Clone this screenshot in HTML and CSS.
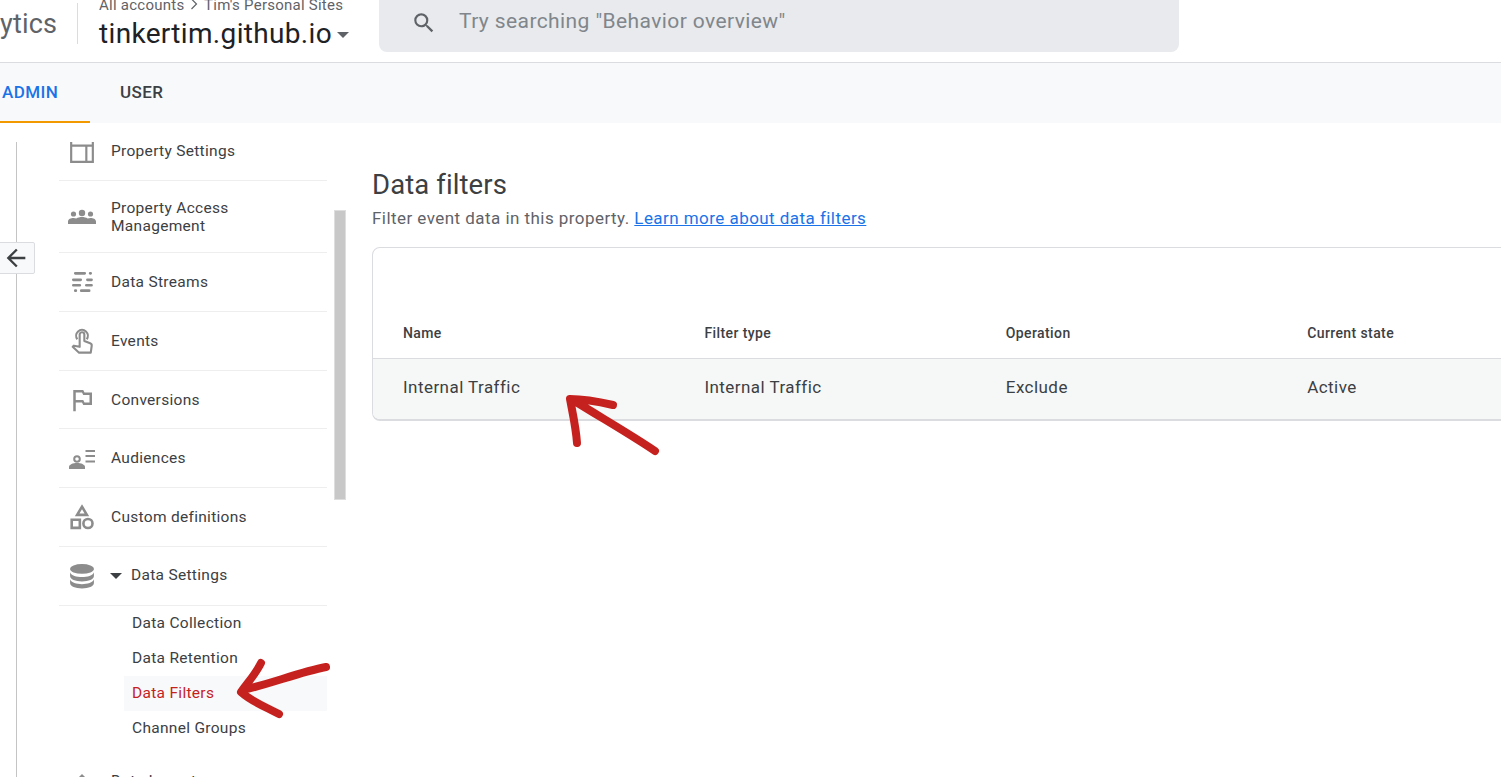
FILE: index.html
```html
<!DOCTYPE html>
<html lang="en">
<head>
    <meta charset="UTF-8">
    <meta name="viewport" content="width=device-width, initial-scale=1.0">
    <title>Data filters</title>
    <link rel="stylesheet" href="styles.css">
</head>
<body>
    <header class="topbar">
        <div class="product">ytics</div>
        <div class="account">
            <div class="crumbs">All accounts
                <svg class="crumb-sep" viewBox="0 0 8 12"><path d="M1.5 1l5 5-5 5"/></svg>
                Tim's Personal Sites</div>
            <div class="site">tinkertim.github.io<span class="caret site-caret"></span></div>
        </div>
        <div class="search">
            <svg class="search-icon" viewBox="0 0 24 24"><path d="M15.5 14h-.79l-.28-.27A6.47 6.47 0 0 0 16 9.5 6.5 6.5 0 1 0 9.5 16c1.61 0 3.09-.59 4.23-1.57l.27.28v.79l5 4.99L20.49 19l-4.99-5zm-6 0C7.01 14 5 11.99 5 9.5S7.01 5 9.5 5 14 7.01 14 9.5 11.99 14 9.5 14z"/></svg>
            <span class="search-text">Try searching "Behavior overview"</span>
        </div>
    </header>

    <nav class="tabs">
        <div class="tab active">ADMIN</div>
        <div class="tab">USER</div>
    </nav>

    <div class="content">
        <aside class="sidebar">
            <ul class="menu">
                <li class="menu-item first">
                    <svg class="icon" viewBox="0 0 24 24"><path class="line" d="M2 2h20v20H2zM2 7h20M16 7v15"/></svg>
                    Property Settings
                </li>
                <li class="menu-item tall">
                    <svg class="icon wide" viewBox="0 0 28 24"><circle cx="14" cy="8" r="3.2"/><circle cx="5.5" cy="9" r="2.6"/><circle cx="22.5" cy="9" r="2.6"/><path d="M0 19v-2.5C0 14 3 13 5.5 13c1 0 2 .2 2.8.5C9.800 12.500 12 12 14 12s4.200.5 5.700 1.500c.8-.3 1.800-.5 2.800-.5 2.500 0 5.500 1 5.500 3.500V19z"/></svg>
                    <span class="tall-label">Property Access<br>Management</span>
                </li>
                <li class="menu-item">
                    <svg class="icon" viewBox="0 0 24 24"><path class="line thick" d="M5.800 4h8.700M19.500 4h.5M4 10h6.800M17 10h3.800M4 15h6M16 15h4.800M5.800 20h.5M11.300 20h7.300"/></svg>
                    Data Streams
                </li>
                <li class="menu-item">
                    <svg class="icon mid" viewBox="0 0 24 24"><path class="line thin" d="M8 10.500a5 5 0 1 1 8 0M10 11V6.500a2 2 0 0 1 4 0V12l5 2c1 .4 1.500 1.300 1.300 2.300L19.500 22H9.500L4 17l1-1 5 1z"/></svg>
                    Events
                </li>
                <li class="menu-item short">
                    <svg class="icon big" viewBox="0 0 24 24"><path d="M14 6l-1-2H5v17h2v-7h5l1 2h7V6h-6zm4 8h-4l-1-2H7V6h5l1 2h5v6z"/></svg>
                    Conversions
                </li>
                <li class="menu-item">
                    <svg class="icon wide" viewBox="0 0 28 24"><circle class="line" cx="9" cy="13" r="2.800"/><path d="M1 23v-2c0-2.500 4-4 8-4s8 1.500 8 4v2z"/><path class="line" d="M17.500 5H27M17.500 10H27M17.500 15.500H27"/></svg>
                    Audiences
                </li>
                <li class="menu-item">
                    <svg class="icon" viewBox="0 0 24 24"><path class="line heavy" d="M12 2.500l4.500 7.500h-9zM2.500 14.500h7.500v7.500H2.500z"/><circle class="line heavy" cx="17.500" cy="18" r="4.200"/></svg>
                    Custom definitions
                </li>
                <li class="menu-item open">
                    <svg class="icon" viewBox="0 0 24 24"><ellipse cx="12" cy="5.500" rx="11" ry="4.500"/><path d="M1 8.500c1 3 6 4.500 11 4.500s10-1.500 11-4.500V12c0 3-5 5-11 5S1 15 1 12zM1 15c1 3 6 4.500 11 4.500S22 18 23 15v3.500c0 3-5 5-11 5s-11-2-11-5z"/></svg>
                    <span class="caret open-caret"></span>
                    <span class="open-label">Data Settings</span>
                </li>
            </ul>
            <ul class="submenu">
                <li>Data Collection</li>
                <li>Data Retention</li>
                <li class="current">Data Filters</li>
                <li>Channel Groups</li>
            </ul>
            <div class="menu-item cut">
                <svg class="icon" viewBox="0 0 24 24"><path d="M12 5.500l6 6H6z"/></svg>
                Data Import
            </div>
            <div class="scrollbar"></div>
        </aside>

        <main class="page">
            <h1>Data filters</h1>
            <p class="intro">Filter event data in this property. <a href="#">Learn more about data filters</a></p>
            <section class="card">
                <div class="row head">
                    <div>Name</div>
                    <div>Filter type</div>
                    <div>Operation</div>
                    <div>Current state</div>
                </div>
                <div class="row body-row">
                    <div>Internal Traffic</div>
                    <div>Internal Traffic</div>
                    <div>Exclude</div>
                    <div>Active</div>
                </div>
            </section>
        </main>
    </div>

    <button class="back">
        <svg viewBox="0 0 24 24"><path d="M20 11H7.830l5.590-5.590L12 4l-8 8 8 8 1.410-1.410L7.830 13H20v-2z"/></svg>
    </button>

    <!-- red arrows drawn over the screenshot -->
    <svg class="marks" viewBox="0 0 1501 777">
        <path d="M655 451C630 434 600 417 573 400M577 443C576 428 573 415 570 399C585 399 600 402 613 405"/>
        <path d="M326 667C300 672 270 684 243 690M261 663C255 675 248 682 241 692C252 702 266 707 279 714"/>
    </svg>
</body>
</html>
```

FILE: styles.css
```css
* {
  box-sizing: border-box;
}

html, body {
  margin: 0;
  height: 100%;
}

body {
  width: 1501px;
  height: 777px;
  overflow: hidden;
  position: relative;
  background: #fff;
  color: #3c4043;
  font-family: Roboto, "Liberation Sans", sans-serif;
}

ul {
  list-style: none;
  margin: 0;
  padding: 0;
}

/* top bar */
.topbar {
  height: 63px;
  display: flex;
  border-bottom: 1px solid #dadce0;
}

.product {
  width: 78px;
  height: 41px;
  margin-top: 3px;
  padding-top: 5px;
  border-right: 1px solid #dadce0;
  font-size: 27px;
  letter-spacing: .2px;
  color: #5f6368;
}

.account {
  width: 280px;
  margin-left: 21px;
  margin-top: -4px;
}

.crumbs {
  font-size: 15px;
  letter-spacing: .25px;
  line-height: 18px;
  color: #5f6368;
  white-space: nowrap;
}

.crumb-sep {
  width: 8px;
  height: 12px;
  margin: 0 2px;
  fill: none;
  stroke: #5f6368;
  stroke-width: 1.200;
}

.site {
  margin-top: 2px;
  font-size: 28px;
  letter-spacing: .33px;
  line-height: 36px;
  color: #202124;
  white-space: nowrap;
}

.caret {
  display: inline-block;
  width: 0;
  height: 0;
  border-left: 6px solid transparent;
  border-right: 6px solid transparent;
  border-top: 6px solid #5f6368;
}

.site-caret {
  margin-left: 5px;
  vertical-align: 5px;
}

.search {
  width: 800px;
  height: 52px;
  display: flex;
  align-items: center;
  padding-left: 32px;
  padding-bottom: 6px;
  background: #e8eaed;
  border-radius: 0 0 8px 8px;
  font-size: 21px;
  letter-spacing: .4px;
  color: #80868b;
}

.search-icon {
  width: 26px;
  height: 26px;
  margin-right: 22px;
  fill: #5f6368;
}

.search-text {
  margin-top: -4px;
}

/* tabs */
.tabs {
  height: 60px;
  display: flex;
  background: #f8f9fa;
}

.tab {
  width: 90px;
  padding-left: 30px;
  line-height: 58px;
  font-size: 17px;
  letter-spacing: .4px;
  font-weight: 500;
  color: #3c4043;
}

.tab.active {
  padding-left: 2px;
  color: #1a73e8;
  border-bottom: 2px solid #f29900;
}

/* sidebar */
.content {
  display: flex;
}

.sidebar {
  width: 372px;
  height: 635px;
  margin-top: 19px;
  flex-shrink: 0;
  overflow: hidden;
  position: relative;
  border-left: 1px solid #c4c4c4;
  margin-left: 16px;
  margin-right: -16px;
  padding-left: 42px;
  font-size: 15.5px;
  letter-spacing: .3px;
}

.menu {
  width: 268px;
  margin-top: -21px;
}

.menu-item {
  width: 268px;
  height: 59px;
  display: flex;
  align-items: center;
  border-bottom: 1px solid #eeeeee;
  color: #3c4043;
  line-height: 18px;
}

.menu-item.first {
  height: 60px;
}

.menu-item.tall {
  height: 72px;
}

.tall-label {
  margin-top: 1px;
}

.menu-item.short {
  height: 58px;
}

.icon {
  width: 26px;
  height: 26px;
  margin-left: 10px;
  margin-right: 16px;
  flex-shrink: 0;
  fill: #8c8c8c;
}

.icon.wide {
  width: 28px;
  height: 24px;
  margin-left: 9px;
  margin-right: 15px;
}

.icon.mid {
  width: 28px;
  height: 28px;
  margin-left: 9px;
  margin-right: 15px;
}

.icon.big {
  width: 30px;
  height: 30px;
  margin-left: 8px;
  margin-right: 14px;
}

.line {
  fill: none;
  stroke: #8c8c8c;
  stroke-width: 2;
}

.line.heavy {
  stroke-width: 2.400;
}

.line.thick {
  stroke-width: 2.500;
  stroke-linecap: round;
}

.line.thin {
  stroke-width: 1.800;
  stroke-linejoin: round;
}

.open-caret {
  margin-left: -1px;
  margin-right: 9px;
  border-top-color: #3c4043;
}

.open-label {
  margin-top: -3px;
}

.submenu {
  width: 268px;
  padding-left: 65px;
}

.submenu li {
  height: 35px;
  line-height: 35px;
  padding-left: 8px;
}

.submenu .current {
  background: #f8f9fa;
  color: #c5221f;
}

.menu-item.cut {
  margin-top: 5px;
  border-bottom: none;
}

.scrollbar {
  position: absolute;
  left: 317px;
  top: 68px;
  width: 12px;
  height: 290px;
  background: #c8c8c8;
  border: 1px solid #dedede;
}

/* main */
.page {
  flex: 1;
  min-width: 0;
  padding-top: 44px;
}

h1 {
  margin: 0;
  font-size: 27.500px;
  letter-spacing: .1px;
  line-height: 36px;
  font-weight: 400;
  color: #3c4043;
}

.intro {
  margin: 5px 0 0;
  font-size: 17px;
  letter-spacing: .45px;
  line-height: 20px;
  color: #5f6368;
}

.intro a {
  color: #1a73e8;
}

.card {
  width: 1260px;
  height: 174px;
  margin-top: 19px;
  padding-top: 68px;
  border: 1px solid #dadce0;
  border-bottom-width: 2px;
  border-radius: 8px;
  overflow: hidden;
}

.row {
  display: grid;
  grid-template-columns: repeat(4, 301.400px);
  padding-left: 30px;
  align-items: center;
}

.row.head {
  height: 43px;
  padding-bottom: 9px;
  font-size: 14px;
  letter-spacing: .4px;
  font-weight: 500;
  border-bottom: 1px solid #dadce0;
}

.row.body-row {
  height: 61px;
  padding-bottom: 6px;
  font-size: 17px;
  letter-spacing: .45px;
  background: #f6f8f8;
}

/* overlays */
.back {
  position: absolute;
  left: -6px;
  top: 242px;
  width: 41px;
  height: 32px;
  padding: 0 0 0 2px;
  border: 1px solid #dadce0;
  border-radius: 2px;
  background: #f8f9fa;
}

.back svg {
  display: block;
  width: 28px;
  height: 28px;
  margin: auto;
  fill: #3c4043;
}

.marks {
  position: absolute;
  left: 0;
  top: 0;
  width: 1501px;
  height: 777px;
  pointer-events: none;
  fill: none;
  stroke: #c5221f;
  stroke-width: 8;
  stroke-linecap: round;
  stroke-linejoin: round;
}
```
